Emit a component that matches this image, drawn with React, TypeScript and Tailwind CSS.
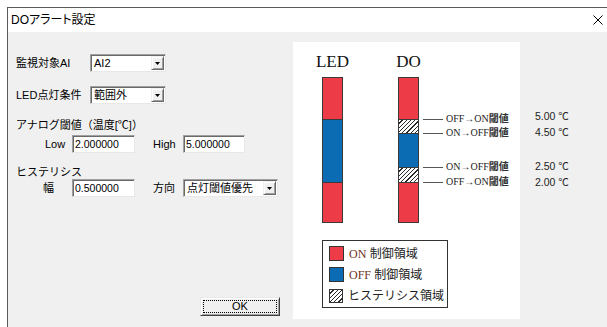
import React from "react";

const sans = "font-['Liberation_Sans','Noto_Sans_CJK_JP',sans-serif]";
const serif = "font-['Liberation_Serif','Noto_Sans_CJK_JP',serif]";

const fieldCls =
  "h-[18px] bg-white border border-t-[#a0a0a0] border-l-[#a0a0a0] border-b-[#e8e8e8] border-r-[#e8e8e8] shadow-[inset_1px_1px_0_#6a6a6a] flex items-center text-[10.5px] text-black";

function DropBtn() {
  return (
    <div className="w-[13px] h-[14px] bg-[#f0f0f0] border border-t-[#f0f0f0] border-l-[#f0f0f0] border-b-[#696969] border-r-[#696969] shadow-[inset_1px_1px_0_#ffffff,inset_-1px_-1px_0_#a0a0a0] flex items-center justify-center">
      <svg width="5" height="3" viewBox="0 0 5 3">
        <path d="M0 0H5L2.5 3Z" fill="#000" />
      </svg>
    </div>
  );
}

function Combo({ cls, text }: { cls: string; text: string }) {
  return (
    <div className={`${fieldCls} ${cls} justify-between pl-[3px] pr-[1px]`}>
      <span className="text-[11px] leading-none">{text}</span>
      <DropBtn />
    </div>
  );
}

function Field({ cls, text }: { cls: string; text: string }) {
  return (
    <div className={`${fieldCls} ${cls} pl-[2px]`}>
      <span className="leading-none">{text}</span>
    </div>
  );
}

const hatch =
  "bg-[repeating-linear-gradient(135deg,#ffffff_0px,#ffffff_2px,#2a2a2a_2px,#2a2a2a_3px)]";

function Annot({ top, text, from, to }: { top: string; text?: string; from: string; to: string }) {
  return (
    <div className={`absolute left-[25px] ${top} -translate-y-1/2 flex items-center whitespace-nowrap`}>
      <div className="w-[20px] h-px bg-[#555]" />
      <span className={`ml-[3px] text-[10px] leading-none text-[#222] ${serif}`}>
        {from}→{to}
        <span className={`${sans} font-bold text-[10px] text-[#333]`}>閾値</span>
      </span>
      {text}
    </div>
  );
}

export default function App() {
  return (
    <div className={`w-[607px] h-[327px] bg-white overflow-hidden ${sans}`}>
      <div className="ml-[7px] mt-[7px] h-[320px] border-l border-t border-[#5a5a5a] flex flex-col">
        {/* title bar */}
        <div className="h-[24px] bg-white flex items-center justify-between pl-[3px] pr-[4px]">
          <span className="text-[12px] leading-none text-black [font-feature-settings:'palt'] font-['Liberation_Sans','Noto_Sans_CJK_JP',sans-serif]">
            DOアラート設定
          </span>
          <svg width="10" height="10" viewBox="0 0 10 10">
            <path d="M0.5 0.5L9.5 9.5M9.5 0.5L0.5 9.5" stroke="#000" strokeWidth="1" />
          </svg>
        </div>
        {/* body */}
        <div className="flex-1 bg-[#f0f0f0] flex">
          {/* left controls */}
          <div className="w-[285px] flex flex-col pt-[22px] text-[11px] text-black">
            <div className="flex items-center h-[18px] pl-[8px]">
              <span className="w-[74px]">監視対象AI</span>
              <Combo cls="w-[76px]" text="AI2" />
            </div>
            <div className="flex items-center h-[18px] pl-[8px] mt-[14px]">
              <span className="w-[74px]">LED点灯条件</span>
              <Combo cls="w-[76px]" text="範囲外" />
            </div>
            <div className="h-[12px] leading-[12px] pl-[8px] mt-[15px]">アナログ閾値（温度[℃]）</div>
            <div className="flex items-center h-[18px] pl-[37px] mt-[4px]">
              <span className="w-[27px]">Low</span>
              <Field cls="w-[63px]" text="2.000000" />
              <span className="w-[30px] ml-[18px]">High</span>
              <Field cls="w-[62px]" text="5.000000" />
            </div>
            <div className="h-[12px] leading-[12px] pl-[8px] mt-[13px]">ヒステリシス</div>
            <div className="flex items-center h-[18px] pl-[35px] mt-[1px]">
              <span className="w-[29px]">幅</span>
              <Field cls="w-[63px]" text="0.500000" />
              <span className="w-[30px] ml-[18px]">方向</span>
              <Combo cls="w-[95px]" text="点灯閾値優先" />
            </div>
            <div className="ml-[192px] mt-[100px] w-[80px] h-[19px] bg-[#f0f0f0] border border-t-[#e8e8e8] border-l-[#e8e8e8] border-b-[#404040] border-r-[#404040] shadow-[inset_1px_1px_0_#ffffff,inset_-1px_-1px_0_#a0a0a0] p-[2px]">
              <div className="w-full h-full border border-dotted border-black flex items-center justify-center text-[11px] leading-none">
                OK
              </div>
            </div>
          </div>

          {/* diagram panel */}
          <div className="mt-[10px] w-[227px] h-[277px] bg-white flex flex-col pl-[29px] pt-[10px]">
            <div className="flex">
              {/* LED */}
              <div className="w-[21px] flex flex-col items-center">
                <div className={`h-[20px] leading-[20px] text-[17px] text-[#111] whitespace-nowrap ${serif}`}>LED</div>
                <div className="mt-[5px] w-[21px] border border-[#3a3a3a] flex flex-col">
                  <div className="h-[41px] bg-[#ee3b48]" />
                  <div className="h-[63px] border-t border-[#3a3a3a] bg-[#0b6cb3]" />
                  <div className="h-[40px] border-t border-[#3a3a3a] bg-[#ee3b48]" />
                </div>
              </div>
              {/* DO */}
              <div className="w-[21px] ml-[55px] flex flex-col items-center">
                <div className={`h-[20px] leading-[20px] text-[17px] text-[#111] whitespace-nowrap ${serif}`}>DO</div>
                <div className="relative mt-[5px] w-[21px]">
                  <div className="w-[21px] border border-[#3a3a3a] flex flex-col">
                    <div className="h-[41px] bg-[#ee3b48]" />
                    <div className={`h-[14px] border-t border-[#3a3a3a] ${hatch}`} />
                    <div className="h-[34px] border-t border-[#3a3a3a] bg-[#0b6cb3]" />
                    <div className={`h-[15px] border-t border-[#3a3a3a] ${hatch}`} />
                    <div className="h-[40px] border-t border-[#3a3a3a] bg-[#ee3b48]" />
                  </div>
                  <Annot top="top-[42px]" from="OFF" to="ON" />
                  <Annot top="top-[56px]" from="ON" to="OFF" />
                  <Annot top="top-[90px]" from="ON" to="OFF" />
                  <Annot top="top-[105px]" from="OFF" to="ON" />
                </div>
              </div>
            </div>
            {/* legend */}
            <div className="mt-[17px] w-[126px] h-[68px] border border-[#333] pl-[6px] pt-[5px] flex flex-col gap-[6px]">
              <div className="flex items-center h-[15px]">
                <div className="w-[15px] h-[15px] bg-[#ee3b48] border border-[#333]" />
                <span className={`ml-[5px] text-[12px] leading-none whitespace-nowrap ${serif}`}>
                  <span className="text-[#6e3219]">ON</span>
                  <span className={`${sans} text-[#222]`}> 制御領域</span>
                </span>
              </div>
              <div className="flex items-center h-[15px]">
                <div className="w-[15px] h-[15px] bg-[#0b6cb3] border border-[#333]" />
                <span className={`ml-[5px] text-[12px] leading-none whitespace-nowrap ${serif}`}>
                  <span className="text-[#6e3219]">OFF</span>
                  <span className={`${sans} text-[#222]`}> 制御領域</span>
                </span>
              </div>
              <div className="flex items-center h-[15px]">
                <div className={`w-[14px] h-[14px] border border-[#333] ${hatch}`} />
                <span className="ml-[5px] text-[12px] leading-none whitespace-nowrap text-[#222]">ヒステリシス領域</span>
              </div>
            </div>
          </div>

          {/* values */}
          <div className="flex-1 pl-[15px] pt-[76px] flex flex-col text-[10.5px] text-[#222]">
            <div className="h-[16px] leading-[16px]">5.00 ℃</div>
            <div className="h-[16px] leading-[16px]">4.50 ℃</div>
            <div className="h-[16px] leading-[16px] mt-[18px]">2.50 ℃</div>
            <div className="h-[16px] leading-[16px]">2.00 ℃</div>
          </div>
        </div>
      </div>
    </div>
  );
}
